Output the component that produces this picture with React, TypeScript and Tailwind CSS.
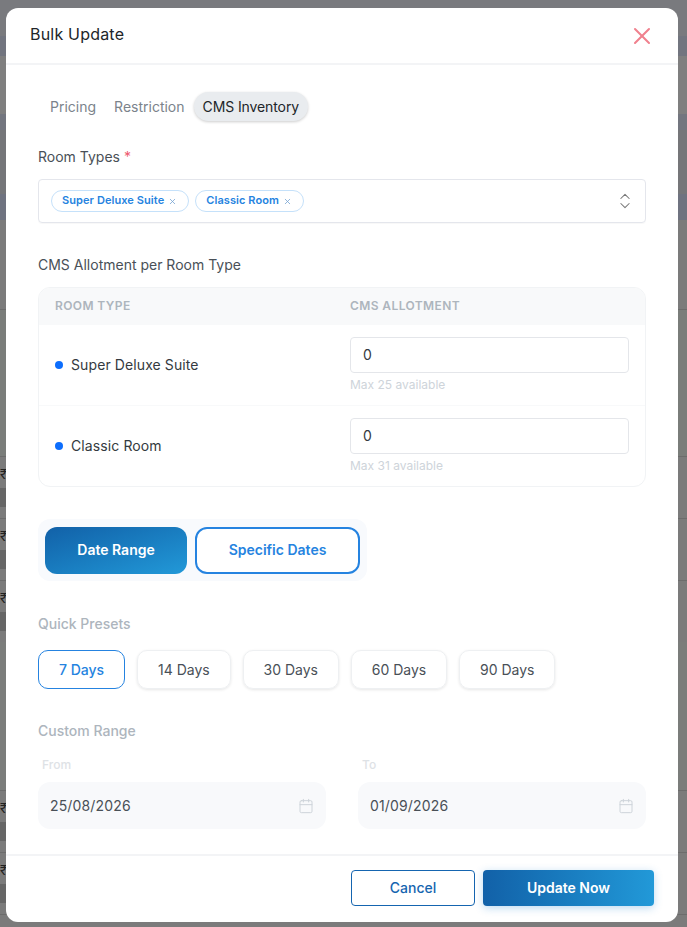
import { useState } from 'react';
import { Calendar, ChevronsUpDown, X } from 'lucide-react';

const presets = ['7 Days', '14 Days', '30 Days', '60 Days', '90 Days'];

const rooms = [
  { name: 'Super Deluxe Suite', max: 25 },
  { name: 'Classic Room', max: 31 },
];

function BehindRow() {
  return (
    <div className="flex h-[62px] shrink-0 flex-col border-t border-[#6c6c6c] bg-[#7b7b7b] pt-[11px]">
      <span className="h-[14px]">₹</span>
      <span className="mt-[6px] h-[19px] w-[6px] bg-[#666]" />
    </div>
  );
}

// what is left visible of the page behind the dialog
function PageBehind() {
  return (
    <div className="flex h-[927px] flex-col bg-[#7c7d7f] text-[13px] leading-none text-[#222]">
      <div className="h-[36px] shrink-0 bg-[#797a7e]" />
      <div className="h-[20px] shrink-0 bg-[#72757f]" />
      <div className="h-[58px] shrink-0 bg-[#7f7f7f]" />
      <div className="h-[16px] shrink-0 bg-[#73767f]" />
      <div className="h-[64px] shrink-0 bg-[#757679]" />
      <div className="h-[26px] shrink-0 bg-[#6f7380]" />
      <div className="h-[90px] shrink-0 border-b border-[#6c6c6c] bg-[#7b7b7b]" />
      <div className="h-[146px] shrink-0 bg-[#7a7d7a]" />
      <BehindRow />
      <BehindRow />
      <BehindRow />
      <div className="h-[148px] shrink-0 bg-[#7b7d7b]" />
      <BehindRow />
      <BehindRow />
      <div className="h-[13px] shrink-0 border-t border-[#6c6c6c] bg-[#7b7b7b]" />
    </div>
  );
}

function SectionLabel({ children }: { children: React.ReactNode }) {
  return <div className="text-[14px] font-medium leading-[20px] text-[#adb5bd]">{children}</div>;
}

function DateField({ label, value }: { label: string; value: string }) {
  return (
    <div className="flex-1">
      <div className="pl-[4px] pt-[1px] text-[12px] font-medium leading-[16px] text-[#dee2e6]">{label}</div>
      <div className="mt-[9px] flex h-[47px] items-center justify-between rounded-[12px] bg-[#f8f9fb] px-[12px]">
        <span className="pb-[1px] text-[14px] tracking-[0.15px] text-[#495057]">{value}</span>
        <Calendar className="h-[16px] w-[16px] text-[#ced4da]" strokeWidth={1.5} />
      </div>
    </div>
  );
}

export default function App() {
  const [active] = useState('CMS Inventory');

  return (
    <div className="relative h-[927px] w-[687px] overflow-hidden font-['Inter',sans-serif]">
      <PageBehind />

      <div className="absolute left-[6px] top-[8px] flex h-[914px] w-[672px] flex-col rounded-[12px] bg-white">
        <div className="flex h-[57px] shrink-0 items-center justify-between border-b-2 border-[#f3f4f6] pl-[24px] pr-[22px]">
          <h2 className="mb-[3px] text-[16px] tracking-[0.2px] text-[#212529]">Bulk Update</h2>
          <X className="h-[28px] w-[28px] text-[#f0818e]" strokeWidth={1.75} />
        </div>

        <div className="flex-1 px-[32px] pt-[27px]">
          <div className="ml-[3px] flex">
            {['Pricing', 'Restriction', 'CMS Inventory'].map((tab) => (
              <button
                key={tab}
                className={
                  tab === active
                    ? 'h-[29px] rounded-full bg-[#e9ecef] px-[9px] pb-[1px] text-[14px] tracking-[-0.1px] text-[#212529] shadow-[0_1px_3px_rgba(0,0,0,0.2)]'
                    : 'h-[29px] px-[9px] pb-[1px] text-[14px] text-[#7b838b]'
                }
              >
                {tab}
              </button>
            ))}
          </div>

          <div className="mt-[26px] text-[14px] leading-[20px] text-[#495057]">
            Room Types <span className="text-[#ee5a6f]">*</span>
          </div>
          <div className="mt-[12px] flex h-[44px] items-center justify-between rounded-[4px] border border-[#e4e6ec] pl-[12px] pr-[10px] shadow-[0_1px_1px_rgba(0,0,0,0.03)]">
            <div className="flex gap-[6px]">
              {rooms.map((room) => (
                <span
                  key={room.name}
                  className="flex h-[22px] items-center gap-[4px] rounded-full border border-[#c5e1fa] pb-[1px] pl-[10px] pr-[11px] text-[11px] font-semibold tracking-[0.08px] text-[#2583e0]"
                >
                  {room.name}
                  <X className="mt-[1px] h-[9px] w-[9px] text-[#6f9fd0]" strokeWidth={2} />
                </span>
              ))}
            </div>
            <ChevronsUpDown className="h-[20px] w-[20px] text-[#777]" strokeWidth={1.25} />
          </div>

          <div className="mt-[32px] text-[14px] leading-[20px] text-[#495057]">
            CMS Allotment per Room Type
          </div>
          <div className="mt-[12px] h-[200px] overflow-hidden rounded-[12px] border border-[#f1f3f5]">
            <div className="flex h-[37px] items-center bg-[#f8f9fa] pb-[1px] text-[12px] font-semibold tracking-[0.4px] text-[#adb5bd]">
              <div className="w-[311px] pl-[16px]">ROOM TYPE</div>
              <div>CMS ALLOTMENT</div>
            </div>
            {rooms.map((room, i) => (
              <div
                key={room.name}
                className={
                  i === 0
                    ? 'flex h-[81px] items-center border-b border-[#f8f9fa]'
                    : 'flex h-[80px] items-center'
                }
              >
                <div className="flex w-[311px] items-center gap-[8px] pb-[1px] pl-[16px]">
                  <span className="h-[8px] w-[8px] rounded-full bg-[#0d6efd]" />
                  <span className="text-[14px] tracking-[0.1px] text-[#343a40]">{room.name}</span>
                </div>
                <div className="w-[279px]">
                  <div className="flex h-[36px] items-center rounded-[4px] border border-[#e4e6ea] pb-[1px] pl-[12px] text-[14px] text-[#343a40]">
                    0
                  </div>
                  <div className="mt-[4px] text-[12px] leading-[16px] text-[#ced4da]">Max {room.max} available</div>
                </div>
              </div>
            ))}
          </div>

          <div className="mt-[32px] flex h-[62px] w-[329px] items-center gap-[8px] rounded-[12px] bg-[#f8fafd] px-[7px]">
            <button className="h-[47px] w-[142px] rounded-[12px] bg-gradient-to-br from-[#1261a8] to-[#2299d8] pb-[1px] text-[14px] font-semibold text-white">
              Date Range
            </button>
            <button className="h-[47px] w-[165px] rounded-[12px] border-2 border-[#2583e0] bg-white pb-[1px] text-[14px] font-semibold text-[#2583e0]">
              Specific Dates
            </button>
          </div>

          <div className="mt-[33px]">
            <SectionLabel>Quick Presets</SectionLabel>
          </div>
          <div className="mt-[16px] flex gap-[12px]">
            {presets.map((preset, i) => (
              <button
                key={preset}
                className={
                  i === 0
                    ? 'h-[39px] rounded-[10px] border border-[#2583e0] px-[20px] pb-[1px] text-[14px] font-medium text-[#2583e0]'
                    : 'h-[39px] rounded-[10px] border border-[#eef0f2] px-[19.9px] pb-[1px] text-[14px] text-[#495057] shadow-[0_1px_3px_rgba(0,0,0,0.1)]'
                }
              >
                {preset}
              </button>
            ))}
          </div>

          <div className="mt-[32px]">
            <SectionLabel>Custom Range</SectionLabel>
          </div>
          <div className="mt-[15px] flex gap-[32px]">
            <DateField label="From" value="25/08/2026" />
            <DateField label="To" value="01/09/2026" />
          </div>
        </div>

        <div className="flex h-[68px] shrink-0 items-start justify-end gap-[8px] border-t-2 border-[#f3f4f6] pr-[24px] pt-[14px]">
          <button className="h-[36px] w-[124px] rounded-[4px] border border-[#1565b0] pb-[1px] text-[14px] font-medium text-[#1565b0]">
            Cancel
          </button>
          <button className="h-[36px] w-[171px] rounded-[4px] bg-gradient-to-r from-[#1261a8] to-[#2299d8] pb-[1px] text-[14px] font-semibold text-white shadow-[0_2px_8px_rgba(33,130,210,0.3)]">
            Update Now
          </button>
        </div>
      </div>
    </div>
  );
}
